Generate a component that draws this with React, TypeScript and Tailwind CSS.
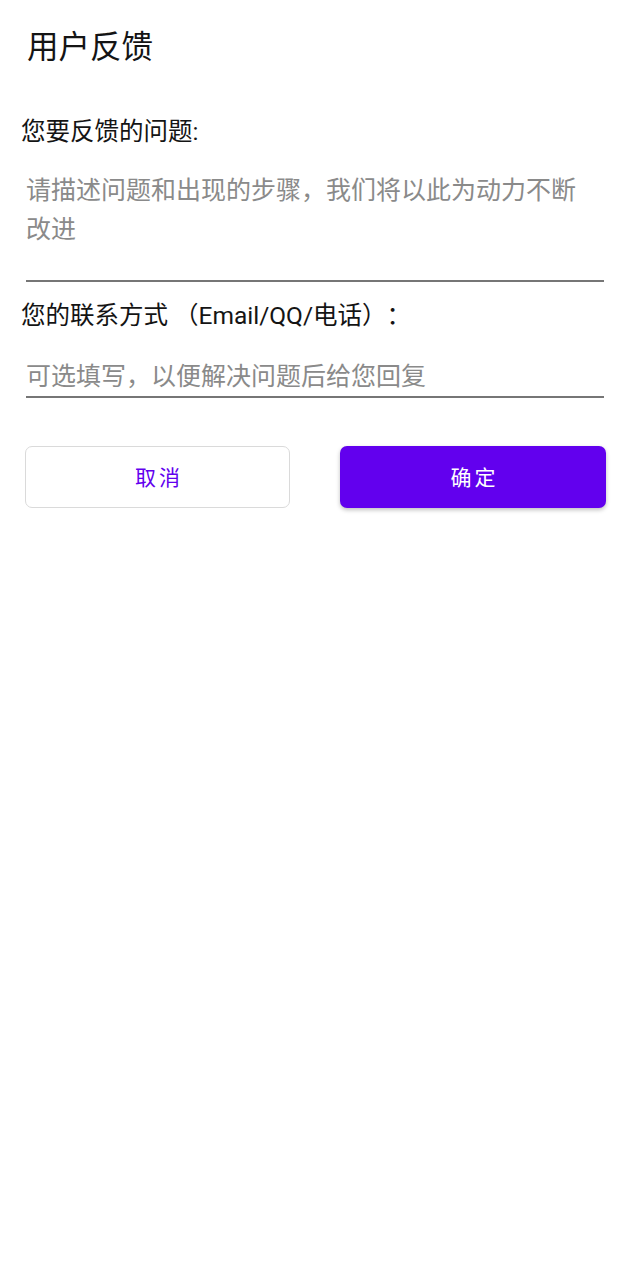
const font = { fontFamily: 'Roboto, "Noto Sans CJK SC", sans-serif' };

export default function App() {
  return (
    <div className="min-h-[1280px] w-[630px] bg-white [text-spacing-trim:space-all]" style={font}>
      <h1 className="pl-[27px] pt-[26px] text-[31.5px] leading-[44px] font-normal text-[#141414]">
        用户反馈
      </h1>

      <div className="mt-[45px] pl-[21px] pr-[26px]">
        <label className="block text-[24.5px] leading-[34px] text-[#141414]">
          您要反馈的问题:
        </label>
        <div className="mt-[22px] ml-[5px] border-b-2 border-[#767676] pb-[31px]">
          <p className="pr-[14px] text-[25px] leading-[39px] text-[#8a8a8a]">
            请描述问题和出现的步骤，我们将以此为动力不断改进
          </p>
        </div>

        <label className="mt-[17px] block text-[24.5px] leading-[34px] text-[#141414]">
          您的联系方式<span className="ml-[6px]">（</span>Email/QQ/电话）：
        </label>
        <div className="mt-[27px] ml-[5px] border-b-2 border-[#767676] pb-[2px]">
          <p className="text-[25px] leading-[34px] text-[#8a8a8a]">
            可选填写，以便解决问题后给您回复
          </p>
        </div>
      </div>

      <div className="mt-[48px] flex justify-between pl-[25px] pr-[24px]">
        <button className="h-[62px] w-[265px] rounded-[7px] border border-[#dadada] bg-white pl-[3px] pt-[4px] text-[21px] tracking-[3px] text-[#6200ee]">
          取消
        </button>
        <button className="h-[62px] w-[266px] rounded-[7px] bg-[#6200ee] pl-[3px] pt-[4px] text-[21px] tracking-[3px] text-white shadow-[0_2px_4px_rgba(0,0,0,0.25)]">
          确定
        </button>
      </div>
    </div>
  );
}
